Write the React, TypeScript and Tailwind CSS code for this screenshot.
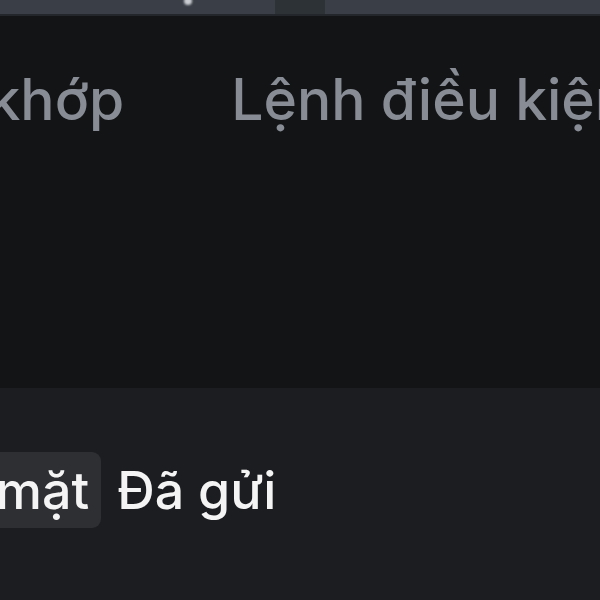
import React from 'react';

const font = { fontFamily: 'Inter, "Noto Sans", sans-serif' };

export default function App() {
  return (
    <div className="w-[600px] h-[600px] overflow-hidden bg-[#131416] flex flex-col" style={font}>
      {/* top strip */}
      <div className="h-[14px] flex bg-[#3a3f47] shrink-0">
        <div className="w-[275px] relative">
          <span className="absolute left-[184px] top-[-3px] w-[8px] h-[8px] rounded-full bg-[#c9ccd1] blur-[1px]" />
        </div>
        <div className="w-[50px] bg-[#2d3237]" />
        <div className="flex-1" />
      </div>
      <div className="h-[2px] bg-[#23262b] shrink-0" />

      {/* tabs */}
      <div className="h-[372px] shrink-0 overflow-hidden">
        <div className="flex items-center gap-[107px] ml-[-161px] mt-[55px] whitespace-nowrap text-[57px] leading-none font-medium text-[#878c95]">
          <span>Lệnh khớp</span>
          <span>Lệnh điều kiện</span>
        </div>
      </div>

      {/* lower panel */}
      <div className="flex-1 bg-[#1c1d20] overflow-hidden">
        <div className="flex items-center gap-[16px] ml-[-139px] mt-[64px] whitespace-nowrap text-[52px] leading-none font-medium text-[#f4f4f5]">
          <span className="bg-[#2e2f33] rounded-[9px] pl-[12px] pr-[12px] h-[76px] flex items-center pt-[2px]">Tiền mặt</span>
          <span className="pt-[2px]">Đã gửi</span>
        </div>
      </div>
    </div>
  );
}
